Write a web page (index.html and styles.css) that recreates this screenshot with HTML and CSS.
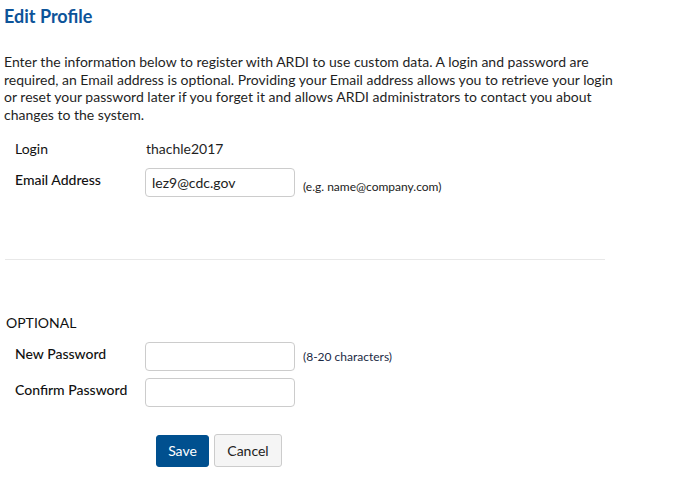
FILE: index.html
```html
<!DOCTYPE html>
<html>
<head>
<meta charset="utf-8">
<link rel="stylesheet" href="styles.css">
</head>
<body>
<div class="page">
  <h1 class="title">Edit Profile</h1>
  <p class="intro">Enter the information below to register with ARDI to use custom data. A login and password are required, an Email address is optional. Providing your Email address allows you to retrieve your login or reset your password later if you forget it and allows ARDI administrators to contact you about changes to the system.</p>

  <div class="row row-login">
    <div class="label">Login</div>
    <div class="value">thachle2017</div>
  </div>
  <div class="row row-email">
    <div class="label label-input">Email Address</div>
    <div class="field">lez9@cdc.gov</div>
    <div class="hint hint-email">(e.g. name@company.com)</div>
  </div>

  <div class="divider"></div>

  <div class="section">OPTIONAL</div>

  <div class="row row-pw">
    <div class="label label-input">New Password</div>
    <div class="field"></div>
    <div class="hint hint-pw">(8-20 characters)</div>
  </div>
  <div class="row row-confirm">
    <div class="label label-input">Confirm Password</div>
    <div class="field"></div>
  </div>

  <div class="actions">
    <button class="btn btn-save">Save</button>
    <button class="btn btn-cancel">Cancel</button>
  </div>
</div>
</body>
</html>
```
FILE: styles.css
```css
html, body {
  margin: 0;
  padding: 0;
  background: #ffffff;
}
body {
  font-family: Lato, "Open Sans", sans-serif;
  font-size: 14px;
  color: #1f1f1f;
}
.page {
  padding: 5px 4px 0 4px;
}
.title {
  margin: 0;
  font-size: 18px;
  line-height: 22px;
  font-weight: 700;
  color: #0d5499;
}
.intro {
  margin: 26px 0 0 0;
  width: 612px;
  line-height: 17.7px;
}
.row {
  display: flex;
  align-items: flex-start;
  padding-left: 11px;
}
.label {
  width: 130px;
  line-height: 18px;
  color: #111;
}
.label-input {
  font-weight: 500;
  padding-top: 3px;
}
.row-login {
  margin-top: 16px;
}
.value {
  padding-left: 1px;
  line-height: 18px;
}
.row-email {
  margin-top: 10px;
}
.field {
  box-sizing: border-box;
  width: 150px;
  height: 29px;
  border: 1px solid #cccccc;
  border-radius: 4px;
  padding: 5px 6px;
  line-height: 17px;
  color: #222;
  background: #fff;
}
.hint {
  margin-left: 8px;
  font-size: 12px;
  line-height: 14px;
  color: #222;
}
.hint-email {
  margin-top: 12px;
}
.hint-pw {
  margin-top: 8px;
  color: #1b2a44;
}
.divider {
  margin: 62px 0 0 1px;
  width: 600px;
  height: 1px;
  background: #e8e8e8;
}
.section {
  margin: 54px 0 0 2px;
  line-height: 18px;
  color: #111;
}
.row-pw {
  margin-top: 10px;
}
.row-confirm {
  margin-top: 7px;
}
.actions {
  display: flex;
  align-items: flex-start;
  gap: 5px;
  margin: 27px 0 0 152px;
}
.btn {
  font-family: Lato, "Open Sans", sans-serif;
  font-size: 14px;
  border-radius: 3px;
  box-sizing: border-box;
  cursor: pointer;
  padding: 0;
}
.btn-save {
  margin-top: 1px;
  width: 53px;
  height: 32px;
  background: #00508f;
  color: #ffffff;
  border: 1px solid #00508f;
}
.btn-cancel {
  width: 68px;
  height: 33px;
  background: #f5f5f5;
  color: #222;
  border: 1px solid #cccccc;
}
```
